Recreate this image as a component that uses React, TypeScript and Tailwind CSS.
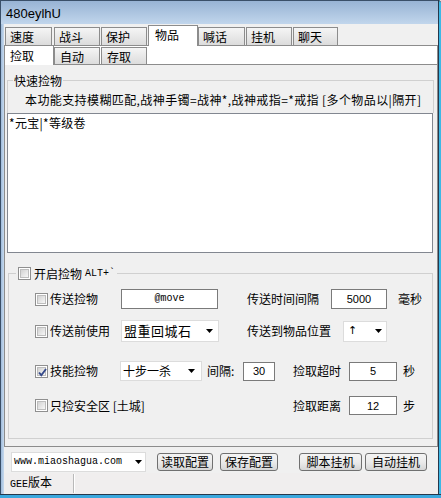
import type { ReactNode } from 'react'

type Tab = { label: string; cls: string; active?: boolean }

const topTabs: Tab[] = [
  { label: '速度', cls: 'ml-[1px] w-[47px]' },
  { label: '战斗', cls: 'ml-[2px] w-[46px]' },
  { label: '保护', cls: 'ml-[1px] w-[46px]' },
  { label: '物品', cls: 'ml-[1px] w-[50px]', active: true },
  { label: '喊话', cls: 'w-[47px]' },
  { label: '挂机', cls: 'ml-[1px] w-[46px]' },
  { label: '聊天', cls: 'ml-[1px] w-[45px]' },
]

const subTabs: Tab[] = [
  { label: '捡取', cls: 'w-[50px]', active: true },
  { label: '自动', cls: 'w-[46px]' },
  { label: '存取', cls: 'ml-[1px] w-[46px]' },
]

function Check({ on = false }: { on?: boolean }) {
  return (
    <span className="relative flex h-[13px] w-[13px] shrink-0 items-center justify-center border border-[#8f8f8f] bg-white">
      <span className="h-[9px] w-[9px] border border-[#bdbdbd] bg-linear-to-br from-[#d2d2d2] to-[#f7f7f7]" />
      {on && (
        <svg className="absolute left-[1px] top-[1px]" width="11" height="11" viewBox="0 0 11 11">
          <path d="M2 5.5L4.3 8.2L9 2" fill="none" stroke="#34498a" strokeWidth="1.9" />
        </svg>
      )}
    </span>
  )
}

function Field({ className, mono, children }: { className: string; mono?: boolean; children: ReactNode }) {
  return (
    <div
      className={`flex items-center justify-center border border-[#7a7a7a] bg-white ${
        mono ? "font-['Liberation_Mono',monospace] text-[10px]" : "font-['Liberation_Sans',sans-serif] text-[11px]"
      } ${className}`}
    >
      {children}
    </div>
  )
}

function Arrow() {
  return (
    <svg width="7" height="4" viewBox="0 0 7 4" className="shrink-0">
      <path d="M0 0H7L3.5 4Z" fill="#000" />
    </svg>
  )
}

function Combo({ className, children }: { className: string; children: ReactNode }) {
  return (
    <div className={`flex items-center justify-between border border-[#dcdcdc] bg-white pl-[2px] ${className}`}>
      <span className="whitespace-nowrap">{children}</span>
      <Arrow />
    </div>
  )
}

function Button({ className, children }: { className: string; children: ReactNode }) {
  return (
    <div
      className={`flex h-[18px] items-center justify-center rounded-[3px] border border-[#707070] bg-linear-to-b from-[#f4f4f4] via-[#ebebeb] to-[#d6d6d6] ${className}`}
    >
      {children}
    </div>
  )
}

export default function App() {
  return (
    <div className="flex h-[498px] w-[441px] flex-col overflow-hidden bg-[#f0f0f0] font-['Noto_Sans_CJK_SC',sans-serif] text-[12px] leading-[14px] text-black">
      {/* title bar */}
      <div className="flex h-[24px] shrink-0">
        <div className="flex flex-1 items-center border-l border-t border-[#3a4f68] bg-linear-to-b from-[#98b3d4] to-[#c1d6ec] pl-[5px] pt-[2px] font-['Liberation_Sans',sans-serif] text-[13px]">
          480eylhU
        </div>
        <div className="w-[3px] rounded-tr-[4px] border-l border-t border-[#26384c] bg-[#3db8e6]" />
      </div>

      <div className="flex flex-1">
        <div className="w-[4px] border-l border-[#3a4f68] bg-linear-to-r from-[#9fbbdb] to-[#c7daee]" />

        <div className="flex w-[434px] flex-col">
          {/* top tabs */}
          <div className="flex h-[21px] items-end">
            {topTabs.map(t =>
              t.active ? (
                <div key={t.label} className={`relative z-10 -mb-[1px] h-[21px] border border-b-0 border-[#8c8c8c] bg-white pl-[6px] pt-[2px] ${t.cls}`}>
                  {t.label}
                </div>
              ) : (
                <div key={t.label} className={`h-[18px] border border-b-0 border-[#8c8c8c] bg-linear-to-b from-[#f5f5f5] to-[#dcdcdc] pl-[4px] pt-[2px] ${t.cls}`}>
                  {t.label}
                </div>
              )
            )}
          </div>

          {/* page */}
          <div className="border-r border-t border-[#8c8c8c] bg-white">
            <div className="flex h-[18px] items-end">
              {subTabs.map(t =>
                t.active ? (
                  <div key={t.label} className={`relative z-10 -mb-[1px] h-[19px] border-x border-[#8c8c8c] bg-white pl-[5px] pt-[3px] ${t.cls}`}>
                    {t.label}
                  </div>
                ) : (
                  <div key={t.label} className={`h-[17px] border border-b-0 border-[#8c8c8c] bg-linear-to-b from-[#f5f5f5] to-[#dcdcdc] pl-[5px] pt-[2px] ${t.cls}`}>
                    {t.label}
                  </div>
                )
              )}
            </div>

            <div className="h-[383px] border-y border-l border-[#8c8c8c] bg-[#f0f0f0]">
              {/* quick pickup */}
              <fieldset className="ml-[2px] mt-[8px] w-[427px] border border-b-0 border-[#d0d0d0] pb-[6px]">
                <legend className="ml-[5px] h-[15px] px-[1px] leading-[15px]">快速捡物</legend>
                <div className="mt-[5px] h-[14px] whitespace-nowrap pl-[17px] tracking-[0.4px]">
                  本功能支持模糊匹配,战神手镯=战神*,战神戒指=*戒指 [多个物品以|隔开]
                </div>
              </fieldset>
              <div className="ml-[2px] h-[140px] w-[426px] border border-[#828790] bg-white px-[1px] pt-[2px] tracking-[0.3px]">
                *元宝|*等级卷
              </div>

              {/* auto pickup */}
              <fieldset className="ml-[3px] mt-[13px] w-[425px] border border-[#d0d0d0] pb-[23px]">
                <legend className="ml-[7px] flex h-[15px] items-center gap-[3px] px-[2px]">
                  <Check />
                  <span>开启捡物</span>
                  <span className="font-['Liberation_Mono',monospace] text-[10px]">ALT+`</span>
                </legend>

                <div className="mt-[8px] flex h-[20px] items-center">
                  <label className="ml-[26px] flex w-[86px] items-center gap-[2px]">
                    <Check />
                    传送捡物
                  </label>
                  <Field className="h-[20px] w-[97px]" mono>
                    @move
                  </Field>
                  <span className="ml-[29px] w-[84px]">传送时间间隔</span>
                  <Field className="h-[20px] w-[56px]">5000</Field>
                  <span className="ml-[11px]">毫秒</span>
                </div>

                <div className="mt-[11px] flex h-[22px] items-center">
                  <label className="ml-[26px] flex w-[86px] items-center gap-[2px]">
                    <Check />
                    传送前使用
                  </label>
                  <Combo className="h-[22px] w-[98px] pr-[5px] text-[13px] tracking-[0.5px]">盟重回城石</Combo>
                  <span className="ml-[28px] w-[96px]">传送到物品位置</span>
                  <Combo className="h-[21px] w-[44px] pr-[4px] font-['DejaVu_Sans',sans-serif] text-[11px]">
                    <span className="pl-[2px]">↑</span>
                  </Combo>
                </div>

                <div className="mt-[19px] flex h-[20px] items-center">
                  <label className="ml-[26px] flex w-[85px] items-center gap-[2px]">
                    <Check on />
                    技能捡物
                  </label>
                  <Combo className="h-[20px] w-[82px] pr-[6px]">十步一杀</Combo>
                  <span className="ml-[5px] w-[36px]">间隔:</span>
                  <Field className="h-[19px] w-[32px]">30</Field>
                  <span className="ml-[18px] w-[56px]">捡取超时</span>
                  <Field className="h-[19px] w-[48px]">5</Field>
                  <span className="ml-[6px]">秒</span>
                </div>

                <div className="mt-[15px] flex h-[19px] items-center">
                  <label className="ml-[26px] flex w-[258px] items-center gap-[2px]">
                    <Check />
                    只捡安全区 [土城]
                  </label>
                  <span className="w-[56px]">捡取距离</span>
                  <Field className="h-[19px] w-[48px]">12</Field>
                  <span className="ml-[6px]">步</span>
                </div>
              </fieldset>
            </div>
          </div>

          {/* bottom bar */}
          <div className="flex h-[26px] items-start pt-[5px]">
            <Combo className="ml-[7px] h-[20px] w-[135px] pr-[3px] font-['Liberation_Mono',monospace] text-[10px]">
              www.miaoshagua.com
            </Combo>
            <Button className="ml-[11px] mt-[1px] w-[56px]">读取配置</Button>
            <Button className="ml-[7px] mt-[1px] w-[58px]">保存配置</Button>
            <Button className="ml-[21px] mt-[1px] w-[63px]">脚本挂机</Button>
            <Button className="ml-[3px] mt-[1px] w-[62px]">自动挂机</Button>
          </div>

          {/* status bar */}
          <div className="flex h-[21px] items-center bg-[#f0eeee]">
            <div className="w-[69px] whitespace-nowrap pl-[6px]">
              <span className="font-['Liberation_Mono',monospace] text-[10px]">GEE</span>版本
            </div>
            <div className="h-[19px] w-[2px] border-l border-[#b9b9b9] bg-white" />
          </div>
        </div>

        <div className="w-[3px] border-l border-[#26384c] bg-[#3db8e6]" />
      </div>

      <div className="h-[4px] shrink-0 border-t border-[#26384c] bg-[#3aa8de]" />
    </div>
  )
}
